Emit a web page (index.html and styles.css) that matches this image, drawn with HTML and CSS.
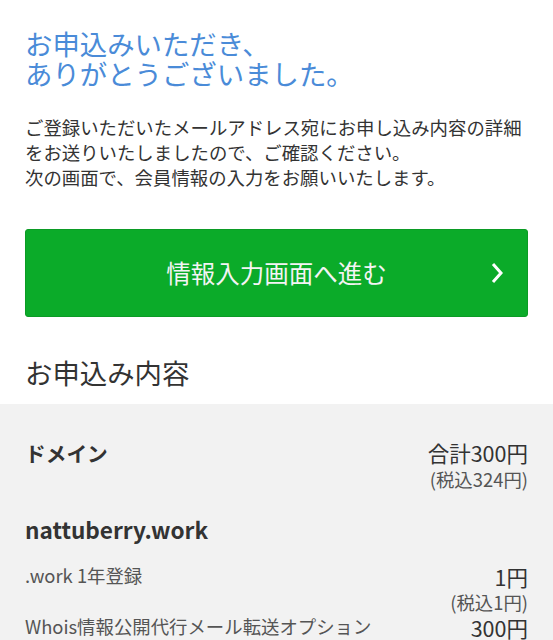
FILE: index.html
```html
<!DOCTYPE html>
<html lang="ja">
<head>
<meta charset="utf-8">
<title>お申込み完了</title>
<link rel="stylesheet" href="styles.css">
</head>
<body>
<main class="page">
  <section class="intro">
    <h1 class="thanks">お申込みいただき、<br>ありがとうございました。</h1>
    <p class="message">ご登録いただいたメールアドレス宛にお申し込み内容の詳細<br>をお送りいたしましたので、ご確認ください。<br>次の画面で、会員情報の入力をお願いいたします。</p>
    <a class="next-btn" href="#">
      <span class="next-label">情報入力画面へ進む</span>
      <svg class="next-icon" width="12" height="22" viewBox="0 0 12 22" aria-hidden="true"><polyline points="2,2 10,11 2,20" fill="none" stroke="#fff" stroke-width="3" stroke-linejoin="miter"/></svg>
    </a>
    <h2 class="section-title">お申込み内容</h2>
  </section>
  <section class="summary">
    <div class="summary-head">
      <div class="summary-label">ドメイン</div>
      <div class="summary-total">
        <div class="total-main">合計300円</div>
        <div class="total-tax">(税込324円)</div>
      </div>
    </div>
    <div class="domain-name">nattuberry.work</div>
    <div class="item">
      <div class="item-name">.work 1年登録</div>
      <div class="item-price">
        <div class="price-main">1円</div>
        <div class="price-tax">(税込1円)</div>
      </div>
    </div>
    <div class="item item-next">
      <div class="item-name">Whois情報公開代行メール転送オプション</div>
      <div class="item-price">
        <div class="price-main">300円</div>
      </div>
    </div>
  </section>
</main>
</body>
</html>
```
FILE: styles.css
```css
* { box-sizing: border-box; }
html, body { margin: 0; padding: 0; background: #fff; }
body {
  font-family: "Noto Sans CJK JP", "Noto Sans", sans-serif;
  color: #333;
  overflow: hidden;
}
.intro { padding: 0 25px; }
.thanks {
  margin: 28px 0 0;
  font-size: 27.4px;
  line-height: 30px;
  font-weight: 400;
  color: #4a8bd8;
}
.message {
  margin: 27px 0 0;
  font-size: 18.4px;
  line-height: 25px;
  color: #333;
}
.next-btn {
  margin-top: 39px;
  height: 88px;
  display: grid;
  grid-template-columns: 1fr auto 1fr;
  align-items: center;
  padding: 0 24px;
  background: #0bab29;
  border: 1px solid #0b9b25;
  border-radius: 3px;
  text-decoration: none;
  color: #fff;
}
.next-label {
  grid-column: 2;
  font-size: 24.5px;
  line-height: 30px;
  color: #f4f4f4;
}
.next-icon {
  grid-column: 3;
  justify-self: end;
  display: block;
}
.section-title {
  margin: 37px 0 14px;
  font-size: 27.4px;
  line-height: 36px;
  font-weight: 400;
  color: #333;
}
.summary {
  background: #f2f2f2;
  padding: 36px 25px 0;
  min-height: 300px;
}
.summary-head {
  display: flex;
  justify-content: space-between;
  align-items: flex-start;
}
.summary-label {
  font-size: 20.7px;
  line-height: 26px;
  font-weight: 700;
  color: #333;
}
.summary-total { text-align: right; }
.total-main {
  font-size: 21.5px;
  line-height: 26px;
  color: #333;
}
.total-tax {
  font-size: 18.4px;
  line-height: 26px;
  color: #555;
}
.domain-name {
  margin-top: 22px;
  font-size: 22.6px;
  line-height: 32px;
  font-weight: 700;
  color: #333;
}
.item {
  display: flex;
  justify-content: space-between;
  align-items: flex-start;
  margin-top: 17px;
}
.item-next { margin-top: 1px; }
.item-name {
  font-size: 18.4px;
  line-height: 25px;
  color: #555;
}
.item-price { text-align: right; }
.price-main {
  font-size: 21.5px;
  line-height: 28px;
  color: #333;
}
.price-tax {
  font-size: 18.4px;
  line-height: 22px;
  color: #555;
}
```
